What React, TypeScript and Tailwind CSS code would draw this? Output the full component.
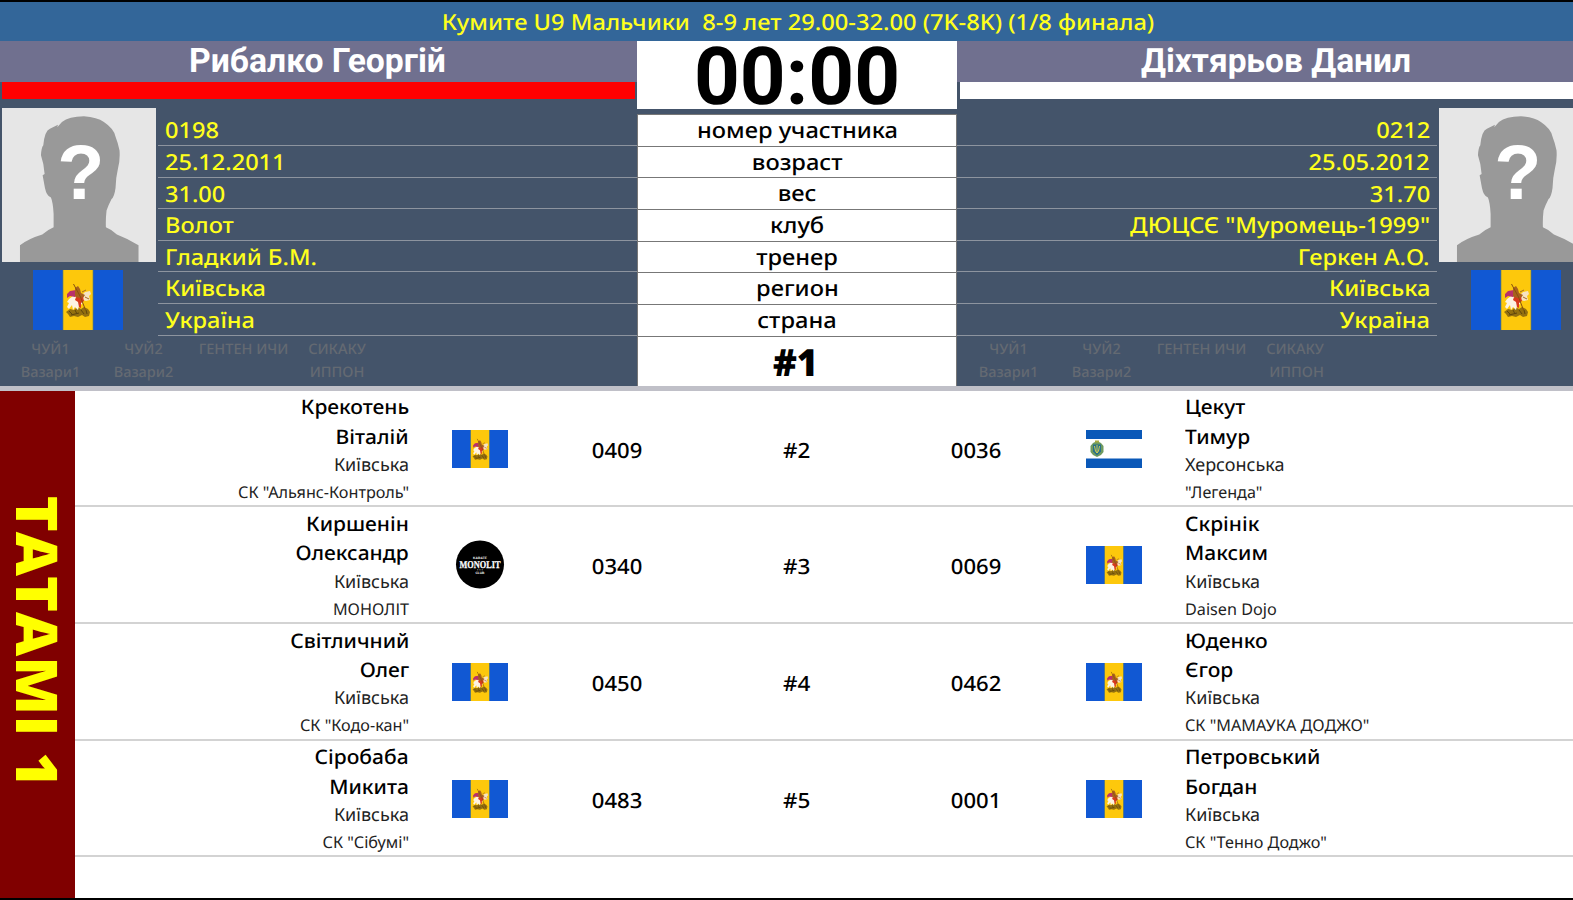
type Athlete = { last: string; first: string; region: string; club: string; flag: "kyiv" | "kherson" | "monolit"; num: string };
type Bout = { id: string; left: Athlete; right: Athlete };

const LABELS = ["номер участника", "возраст", "вес", "клуб", "тренер", "регион", "страна"];
const LEFT = ["0198", "25.12.2011", "31.00", "Волот", "Гладкий Б.М.", "Київська", "Україна"];
const RIGHT = ["0212", "25.05.2012", "31.70", 'ДЮЦСЄ "Муромець-1999"', "Геркен А.О.", "Київська", "Україна"];

const a = (last: string, first: string, region: string, club: string, flag: Athlete["flag"], num: string): Athlete => ({ last, first, region, club, flag, num });

const BOUTS: Bout[] = [
  { id: "#2", left: a("Крекотень", "Віталій", "Київська", 'СК "Альянс-Контроль"', "kyiv", "0409"), right: a("Цекут", "Тимур", "Херсонська", '"Легенда"', "kherson", "0036") },
  { id: "#3", left: a("Киршенін", "Олександр", "Київська", "МОНОЛІТ", "monolit", "0340"), right: a("Скрінік", "Максим", "Київська", "Daisen Dojo", "kyiv", "0069") },
  { id: "#4", left: a("Світличний", "Олег", "Київська", 'СК "Кодо-кан"', "kyiv", "0450"), right: a("Юденко", "Єгор", "Київська", 'СК "МАМАУКА ДОДЖО"', "kyiv", "0462") },
  { id: "#5", left: a("Сіробаба", "Микита", "Київська", 'СК "Сібумі"', "kyiv", "0483"), right: a("Петровський", "Богдан", "Київська", 'СК "Тенно Доджо"', "kyiv", "0001") },
];

function KyivFlag({ className }: { className: string }) {
  return (
    <svg viewBox="0 0 90 60" preserveAspectRatio="none" className={className}>
      <rect width="90" height="60" fill="#1158d3" />
      <rect x="29.6" width="30.8" height="60" fill="#5d7a6a" />
      <rect x="30.3" width="29.4" height="60" fill="#fdc80c" />
      <path d="M33 42l4-3 4 1 3-3 4 2 3-2 4 2 2 3-1 4-4 1-3-2-4 2-4-1-4 1-2-3z" fill="#94700f" />
      <path d="M36 41l3 3M42 40l2 4M48 40l3 4M38 45l8-2M53 40l1 4" stroke="#5f450c" strokeWidth="1" />
      <path d="M36 29l4-3 6 1 4 2-1 5-3 2-1 4-3-3-2 3-1-5-3 4-2-2 2-4-2-1z" fill="#fdf3e2" />
      <path d="M49 25l3-3 5-1 1 3-2 2 1 4-4 1-3-1z" fill="#f7e3c0" />
      <path d="M34 24l3-3 6-1 2 4-3 3-5-1-3 2z" fill="#b9306b" />
      <path d="M42 18l3-2 2 3 1 4 4 2-2 3-5 1-3-3z" fill="#a8611d" />
      <path d="M43 27l4 1 3-1 1 4-3 2v5l-2-1-1-5-3-2z" fill="#d8391d" />
      <path d="M40.500 14l7 13 5 13" stroke="#87500f" strokeWidth="1" fill="none" />
      <path d="M49 22l4-2M52 27l4 2" stroke="#a3682a" strokeWidth="1" />
    </svg>
  );
}

function KhersonFlag({ className }: { className: string }) {
  return (
    <svg viewBox="0 0 56 38" preserveAspectRatio="none" className={className}>
      <rect width="56" height="38" fill="#fff" />
      <rect width="56" height="9" fill="#0a58b8" />
      <rect y="28.5" width="56" height="9.5" fill="#0a58b8" />
      <path d="M7 13l4-2 4 2 2.500 3v6l-2.500 3-4 2-4-2-2.500-3v-6z" fill="#6f9a5f" />
      <path d="M7 14.500h8v7l-4 4-4-4z" fill="#27708a" />
      <path d="M8.500 16l1 5 1.500 2 1.500-2 1-5M11 15v8" stroke="#d2cf57" strokeWidth="1" fill="none" />
      <path d="M9 11.500h4" stroke="#a9ab3f" strokeWidth="2" />
    </svg>
  );
}

function MonolitLogo({ className }: { className: string }) {
  return (
    <svg viewBox="0 0 48 48" className={className}>
      <circle cx="24" cy="23.5" r="24" fill="#000" />
      <g fill="#fff" textAnchor="middle" fontFamily="'Liberation Serif', serif" fontWeight="700">
        <text x="24" y="17.800" fontSize="3.300" textLength="14" lengthAdjust="spacing" fontFamily="'Liberation Sans', sans-serif">KARATE</text>
        <text x="24" y="26.900" fontSize="10.500" textLength="41" lengthAdjust="spacingAndGlyphs" stroke="#fff" strokeWidth=".3">MONOLIT</text>
        <text x="24" y="33" fontSize="3.300" textLength="9" lengthAdjust="spacing" fontFamily="'Liberation Sans', sans-serif">CLUB</text>
      </g>
      <path d="M21 28.800h6" stroke="#999" strokeWidth=".8" strokeDasharray="1 .7" />
    </svg>
  );
}

function Emblem({ kind }: { kind: Athlete["flag"] }) {
  if (kind === "kherson") return <KhersonFlag className="h-[38px] w-[56px]" />;
  if (kind === "monolit") return <MonolitLogo className="h-[48px] w-[48px] overflow-visible" />;
  return <KyivFlag className="h-[38px] w-[56px]" />;
}

function Avatar() {
  return (
    <svg viewBox="4 22 464 464" className="h-[154.5px] w-[154.5px]">
      <rect x="4" y="22" width="464" height="464" fill="#e6e6e6" />
      <path
        d="M58 486V434Q85 414 125 402Q140 388 159 380V340Q157 305 151 291Q138 286 133 262L126 224L132 220Q130 190 121 164Q122 142 128 134Q132 90 148 84L172 72L170 80L184 64Q205 48 250 47Q290 50 310 64Q340 84 345 108Q352 125 357 150Q359 180 352 205Q346 230 345 262Q341 290 333 295Q324 312 318 330Q315 355 316 380Q336 388 349 402Q385 416 414 434V486Z"
        fill="#999"
      />
      <text x="241" y="294" textAnchor="middle" fontSize="232" fontWeight="700" fontFamily="'Liberation Sans', Arial, sans-serif" fill="#fff">?</text>
    </svg>
  );
}

function Photo({ right }: { right?: boolean }) {
  return (
    <div className={right ? "flex w-[157px] shrink-0 flex-col pl-[0.75px]" : "flex w-[157px] shrink-0 flex-col pl-[1.5px]"}>
      <Avatar />
      <KyivFlag className={right ? "mt-[8px] ml-[32px] h-[60px] w-[90px]" : "mt-[8px] ml-[31.5px] h-[60px] w-[90px]"} />
    </div>
  );
}

function Penalties({ right }: { right?: boolean }) {
  return (
    <div
      className={
        right
          ? "grid grid-cols-[93px_93px_107px_80px] grid-rows-[23.5px_23.5px] pt-px pl-[5px] text-center text-[14.5px] leading-[23.5px] font-medium text-[#646a72]"
          : "grid grid-cols-[93px_93px_107px_80px] grid-rows-[23.5px_23.5px] pt-px pl-1 text-center text-[14.5px] leading-[23.5px] font-medium text-[#646a72]"
      }
    >
      <span>ЧУЙ1</span>
      <span>ЧУЙ2</span>
      <span>ГЕНТЕН ИЧИ</span>
      <span>СИКАКУ</span>
      <span>Вазари1</span>
      <span>Вазари2</span>
      <span />
      <span className={right ? "pl-[3px]" : ""}>ИППОН</span>
    </div>
  );
}

function Side({ name, values, right }: { name: string; values: string[]; right?: boolean }) {
  return (
    <div className={right ? "w-[638px] shrink-0" : "w-[637px] shrink-0"}>
      <div className={right ? "h-[41px] bg-[#70708f] text-center font-[Roboto] text-[33.5px] leading-[42px] font-bold text-white" : "h-[41px] bg-[#70708f] pr-[2px] text-center font-[Roboto] text-[33.7px] leading-[42px] font-bold text-white"}>{name}</div>
      <div className={right ? "ml-[3px] h-[17px] bg-white" : "mr-[2px] ml-[2px] h-[17px] bg-[#ff0000]"} />
      <div className={right ? "flex h-[237.500px] flex-row-reverse pt-[8.5px]" : "flex h-[237.500px] pt-[8.5px]"}>
        <Photo right={right} />
        <div className="flex-1 pt-[6.7px]">
          {values.map((v, i) => (
            <div
              key={i}
              className={
                right
                  ? "mr-[1px] h-[31.670px] border-b border-[#8d949f] pr-[7px] text-right text-[22px] leading-[33px] font-medium text-[#ffff1c]"
                  : "ml-[1px] h-[31.670px] border-b border-[#8d949f] pl-[7px] text-[22px] leading-[33px] font-medium text-[#ffff1c]"
              }
            >
              <span className={right ? "inline-block origin-right scale-x-[1.075]" : "inline-block origin-left scale-x-[1.07]"}>{v}</span>
            </div>
          ))}
        </div>
      </div>
      <Penalties right={right} />
    </div>
  );
}

function Names({ p, left }: { p: Athlete; left?: boolean }) {
  const side = left ? "origin-right" : "origin-left";
  return (
    <div className={left ? "flex w-[334px] flex-col items-end pt-[1px]" : "flex flex-1 flex-col items-start pt-[1px] pl-[43.5px]"}>
      <div className={`${side} scale-x-[1.05] text-[20px] leading-[29.400px] font-medium`}>{p.last}</div>
      <div className={`${side} scale-x-[1.05] text-[20px] leading-[29.400px] font-medium`}>{p.first}</div>
      <div className="text-[18px] leading-[28.800px] font-normal text-[#222]">{p.region}</div>
      <div className="text-[16.200px] leading-[24.600px] font-normal text-[#222]">{p.club}</div>
    </div>
  );
}

export default function App() {
  return (
    <div className="flex h-[900px] w-full flex-col overflow-hidden border-y-2 border-black bg-white font-['Noto_Sans',sans-serif] text-black [text-rendering:geometricPrecision]">
      <header className="h-[39px] shrink-0 bg-[#336699] text-center text-[22px] leading-[41px] font-medium whitespace-pre text-[#ffff1c]">
        <span className="ml-[24px] inline-block scale-x-[1.076]">{"Кумите U9 Мальчики  8-9 лет 29.00-32.00 (7K-8K) (1/8 финала)"}</span>
      </header>
      <section className="flex h-[344.500px] shrink-0 bg-[#44546a]">
        <Side name="Рибалко Георгій" values={LEFT} />
        <div className="flex w-[320px] shrink-0 flex-col text-center">
          <div className="h-[68px] bg-white font-[Roboto] text-[80px] leading-[72px] font-bold">00:00</div>
          <div className="mt-[5px] border-x border-t border-[#777]">
            {LABELS.map((l) => (
              <div key={l} className="h-[31.670px] border-b border-[#777] bg-white text-[22px] leading-[31.5px] font-medium">
                <span className="inline-block scale-x-[1.075]">{l}</span>
              </div>
            ))}
          </div>
          <div className="flex-1 border-x border-[#777] bg-white pr-[4px] font-['Open_Sans'] text-[37.5px] leading-[49px] font-black">
            <span className="inline-block scale-x-[.96]">#1</span>
          </div>
        </div>
        <Side name="Діхтярьов Данил" values={RIGHT} right />
      </section>
      <div className="h-[5px] shrink-0 bg-[#c0c0c8]" />
      <main className="flex min-h-0 flex-1">
        <aside className="flex w-[75px] shrink-0 items-center justify-center bg-[#800000]">
          <span className="mb-[4px] scale-y-[1.06] font-['Open_Sans'] text-[57.500px] leading-[75px] font-black whitespace-nowrap text-[#ffff00] [writing-mode:vertical-rl]">ТАТАМІ 1</span>
        </aside>
        <div className="flex-1">
          {BOUTS.map((b) => (
            <div key={b.id} className="flex h-[116.700px] items-center border-b-2 border-[#d3d3d3] text-[21px] font-medium">
              <Names p={b.left} left />
              <div className="ml-[43px] flex w-[56px] justify-center pt-[1.5px]"><Emblem kind={b.left.flag} /></div>
              <div className="ml-[19px] w-[180px] pt-[7px] text-center"><span className="inline-block scale-x-[1.05]">{b.left.num}</span></div>
              <div className="w-[180px] pt-[7px] text-center"><span className="inline-block scale-x-[1.07]">{b.id}</span></div>
              <div className="w-[179px] pt-[7px] text-center"><span className="inline-block scale-x-[1.05]">{b.right.num}</span></div>
              <div className="ml-[19.5px] flex w-[56px] justify-center pt-[1.5px]"><Emblem kind={b.right.flag} /></div>
              <Names p={b.right} />
            </div>
          ))}
        </div>
      </main>
    </div>
  );
}
